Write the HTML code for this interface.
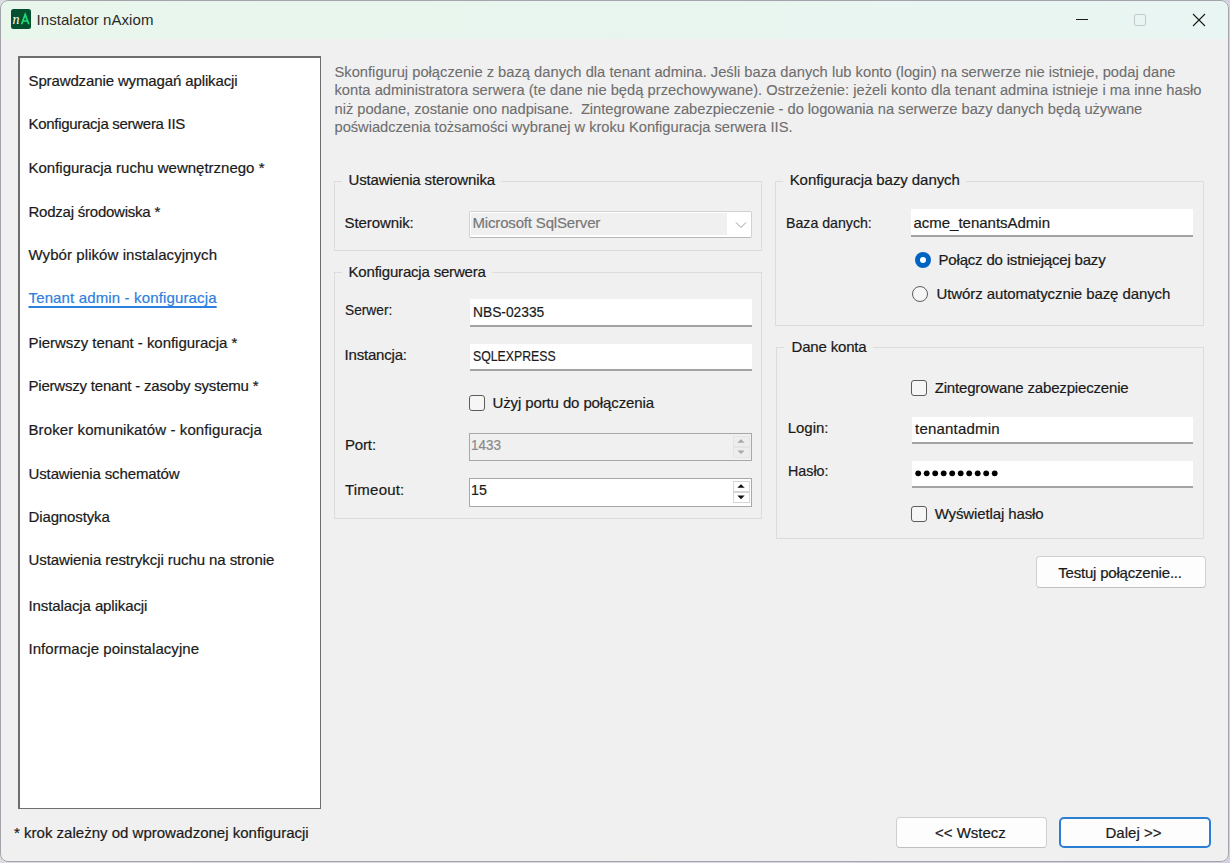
<!DOCTYPE html>
<html><head><meta charset="utf-8">
<style>
html,body{margin:0;padding:0;width:1230px;height:863px;overflow:hidden;background:linear-gradient(90deg,#dcdce2,#d4cfe8);}
body{position:relative;font-family:"Liberation Sans",sans-serif;font-size:14.6px;color:#1a1a1a;}
#win{position:absolute;left:0;top:0;width:1229px;height:862px;border-radius:8px;background:#f0f0f0;overflow:hidden;}
#wb{position:absolute;left:0;top:0;width:1229px;height:862px;box-sizing:border-box;border-radius:8px;border:1px solid #a4a4ac;pointer-events:none;}
#tb{position:absolute;left:0;top:0;width:1229px;height:39px;background:linear-gradient(90deg,#e8f6ec,#e9f5f2);}
.t{position:absolute;white-space:pre;line-height:17px;-webkit-text-stroke:0.2px currentColor;}
.box{position:absolute;box-sizing:border-box;}
.grp{position:absolute;box-sizing:border-box;border:1px solid #dcdcdc;}
.gap{position:absolute;height:3px;background:#f0f0f0;}
.tbx{position:absolute;box-sizing:border-box;background:#fff;border-bottom:2px solid #a3a3a3;}
.chk{position:absolute;box-sizing:border-box;width:16px;height:16px;border:1px solid #5c5c5c;border-radius:3px;background:#f6f6f6;}
.btn{position:absolute;box-sizing:border-box;background:#fdfdfd;border:1px solid #d0d0d0;border-bottom-color:#c0c0c0;border-radius:4px;}
</style></head><body>
<div id="win">
  <div id="tb"></div>
  <svg style="position:absolute;left:11px;top:9px" width="20" height="20" viewBox="0 0 20 20"><rect x="0" y="0" width="20" height="20" rx="2.5" fill="#03502f"/><text x="1.4" y="15.2" font-family="Liberation Serif" font-style="italic" font-size="14" fill="#fff">n</text><path d="M10.6 15.2L14.2 5.4L17.8 15.2M11.2 12H16.8" stroke="#1fe07a" stroke-width="1.6" fill="none"/></svg>
  <div class="box" style="left:1076px;top:19px;width:12px;height:1px;background:#1a1a1a;"></div>
  <div class="box" style="left:1134px;top:14px;width:12px;height:12px;border:1px solid #c4c8c8;border-radius:2px;"></div>
  <svg style="position:absolute;left:1192px;top:13px" width="14" height="14" viewBox="0 0 14 14"><path d="M1 1L13 13M13 1L1 13" stroke="#1a1a1a" stroke-width="1.1"/></svg>

  <div class="box" style="left:18px;top:56px;width:303px;height:753px;background:#fff;border:1px solid #6e6e6e;border-top-width:2px;border-left-width:2px;"></div>

  <div class="grp" style="left:334px;top:181px;width:428px;height:70px;"></div>
  <div class="gap" style="left:342px;top:180px;width:159px;"></div>
  <div class="box" style="left:469px;top:211px;width:283px;height:27px;background:#fff;border:1px solid #d2d2d2;border-bottom-color:#b8b8b8;border-radius:2px;"></div>
  <div class="box" style="left:471px;top:213px;width:256px;height:22px;background:#f0f0f0;"></div>
  <svg style="position:absolute;left:735px;top:221px" width="12" height="8" viewBox="0 0 12 8"><path d="M1 1.5L6 6.5L11 1.5" fill="none" stroke="#9a9a9a" stroke-width="1"/></svg>

  <div class="grp" style="left:334px;top:272px;width:428px;height:247px;"></div>
  <div class="gap" style="left:342px;top:271px;width:150px;"></div>
  <div class="tbx" style="left:470px;top:299px;width:282px;height:28px;"></div>
  <div class="tbx" style="left:470px;top:344px;width:282px;height:27px;"></div>
  <div class="chk" style="left:469px;top:395px;"></div>
  <div class="box" style="left:469px;top:433px;width:283px;height:28px;background:#f0f0f0;border:1px solid #a8a8a8;"></div>
  <div class="box" style="left:733px;top:436px;width:17px;height:11px;background:#ededed;border:1px solid #e4e4e4;"></div>
  <div class="box" style="left:733px;top:447px;width:17px;height:11px;background:#ededed;border:1px solid #e4e4e4;"></div>
  <svg style="position:absolute;left:736px;top:438px" width="10" height="18" viewBox="0 0 10 18"><path d="M1.3 4.8L5 1.2L8.7 4.8Z" fill="#a8a8a8"/><path d="M1.3 12.4L5 16L8.7 12.4Z" fill="#a8a8a8"/></svg>
  <div class="box" style="left:469px;top:478px;width:283px;height:29px;background:#fff;border:1px solid #a8a8a8;"></div>
  <div class="box" style="left:733px;top:481px;width:17px;height:11px;background:#fff;border:1px solid #d6d6d6;"></div>
  <div class="box" style="left:733px;top:492px;width:17px;height:11px;background:#fff;border:1px solid #d6d6d6;"></div>
  <svg style="position:absolute;left:736px;top:483px" width="10" height="18" viewBox="0 0 10 18"><path d="M1.3 4.8L5 1.2L8.7 4.8Z" fill="#111"/><path d="M1.3 12.6L5 16.2L8.7 12.6Z" fill="#111"/></svg>

  <div class="grp" style="left:775px;top:181px;width:429px;height:145px;"></div>
  <div class="gap" style="left:783px;top:180px;width:183px;"></div>
  <div class="tbx" style="left:911px;top:209px;width:282px;height:28px;"></div>
  <div class="box" style="left:915px;top:252px;width:16px;height:16px;border-radius:50%;background:#0063c4;"></div>
  <div class="box" style="left:920px;top:257px;width:6px;height:6px;border-radius:50%;background:#fff;"></div>
  <div class="box" style="left:912px;top:286px;width:16px;height:16px;border-radius:50%;border:1px solid #5c5c5c;background:#f6f6f6;"></div>

  <div class="grp" style="left:776px;top:347px;width:428px;height:192px;"></div>
  <div class="gap" style="left:784px;top:346px;width:89px;"></div>
  <div class="chk" style="left:911px;top:380px;"></div>
  <div class="tbx" style="left:912px;top:417px;width:281px;height:27px;"></div>
  <div class="tbx" style="left:912px;top:461px;width:281px;height:27px;"></div>
  <svg style="position:absolute;left:915px;top:470px" width="90" height="7" viewBox="0 0 90 7">
    <g fill="#000"><circle cx="3.2" cy="3.3" r="2.9"/><circle cx="11.7" cy="3.3" r="2.9"/><circle cx="20.2" cy="3.3" r="2.9"/><circle cx="28.7" cy="3.3" r="2.9"/><circle cx="37.2" cy="3.3" r="2.9"/><circle cx="45.7" cy="3.3" r="2.9"/><circle cx="54.2" cy="3.3" r="2.9"/><circle cx="62.7" cy="3.3" r="2.9"/><circle cx="71.2" cy="3.3" r="2.9"/><circle cx="79.7" cy="3.3" r="2.9"/></g></svg>
  <div class="chk" style="left:911px;top:506px;"></div>

  <div class="btn" style="left:1036px;top:556px;width:170px;height:32px;"></div>
  <div class="btn" style="left:896px;top:817px;width:151px;height:31px;"></div>
  <div class="btn" style="left:1059px;top:817px;width:152px;height:31px;border:2px solid #2a7fd4;border-radius:5px;"></div>
<div class="t" style="left:36.5px;top:10.7px;font-size:15px;letter-spacing:0.065px;color:#2a2a2a;-webkit-text-stroke:0;">Instalator nAxiom</div>
<div class="t" style="left:28.5px;top:71.8px;font-size:15px;letter-spacing:-0.124px;">Sprawdzanie wymagań aplikacji</div>
<div class="t" style="left:28.5px;top:114.7px;font-size:15px;letter-spacing:-0.288px;">Konfiguracja serwera IIS</div>
<div class="t" style="left:28.5px;top:158.6px;font-size:15px;letter-spacing:0.000px;">Konfiguracja ruchu wewnętrznego *</div>
<div class="t" style="left:28.5px;top:202.6px;font-size:15px;letter-spacing:-0.232px;">Rodzaj środowiska *</div>
<div class="t" style="left:28.5px;top:246.0px;font-size:15px;letter-spacing:0.074px;">Wybór plików instalacyjnych</div>
<div class="t" style="left:28.5px;top:289.4px;font-size:15px;letter-spacing:0.145px;color:#2d80dd;text-decoration:underline;text-underline-offset:2.5px;text-decoration-thickness:1.5px;">Tenant admin - konfiguracja</div>
<div class="t" style="left:28.5px;top:333.8px;font-size:15px;letter-spacing:-0.044px;">Pierwszy tenant - konfiguracja *</div>
<div class="t" style="left:28.5px;top:377.1px;font-size:15px;letter-spacing:-0.205px;">Pierwszy tenant - zasoby systemu *</div>
<div class="t" style="left:28.5px;top:421.0px;font-size:15px;letter-spacing:0.100px;">Broker komunikatów - konfiguracja</div>
<div class="t" style="left:28.5px;top:464.7px;font-size:15px;letter-spacing:-0.120px;">Ustawienia schematów</div>
<div class="t" style="left:28.5px;top:508.0px;font-size:15px;letter-spacing:-0.122px;">Diagnostyka</div>
<div class="t" style="left:28.5px;top:551.4px;font-size:15px;letter-spacing:-0.072px;">Ustawienia restrykcji ruchu na stronie</div>
<div class="t" style="left:28.5px;top:596.6px;font-size:15px;letter-spacing:-0.105px;">Instalacja aplikacji</div>
<div class="t" style="left:28.5px;top:640.0px;font-size:15px;letter-spacing:0.053px;">Informacje poinstalacyjne</div>
<div class="t" style="left:14.0px;top:824.0px;font-size:15px;letter-spacing:0.009px;">* krok zależny od wprowadzonej konfiguracji</div>
<div class="t" style="left:334.5px;top:64.1px;font-size:14.7px;letter-spacing:0.013px;color:#6e6e6e;-webkit-text-stroke:0.1px #6e6e6e;">Skonfiguruj połączenie z bazą danych dla tenant admina. Jeśli baza danych lub konto (login) na serwerze nie istnieje, podaj dane</div>
<div class="t" style="left:334.5px;top:82.4px;font-size:14.7px;letter-spacing:0.025px;color:#6e6e6e;-webkit-text-stroke:0.1px #6e6e6e;">konta administratora serwera (te dane nie będą przechowywane). Ostrzeżenie: jeżeli konto dla tenant admina istnieje i ma inne hasło</div>
<div class="t" style="left:334.5px;top:100.7px;font-size:14.7px;letter-spacing:-0.027px;color:#6e6e6e;-webkit-text-stroke:0.1px #6e6e6e;">niż podane, zostanie ono nadpisane.  Zintegrowane zabezpieczenie - do logowania na serwerze bazy danych będą używane</div>
<div class="t" style="left:334.5px;top:119.3px;font-size:14.7px;letter-spacing:-0.024px;color:#6e6e6e;-webkit-text-stroke:0.1px #6e6e6e;">poświadczenia tożsamości wybranej w kroku Konfiguracja serwera IIS.</div>
<div class="t" style="left:348.5px;top:171.2px;font-size:15px;letter-spacing:-0.130px;">Ustawienia sterownika</div>
<div class="t" style="left:344.5px;top:213.7px;font-size:15px;letter-spacing:-0.083px;">Sterownik:</div>
<div class="t" style="left:472.5px;top:214.2px;font-size:15px;letter-spacing:-0.167px;color:#777;">Microsoft SqlServer</div>
<div class="t" style="left:348.5px;top:262.8px;font-size:15px;letter-spacing:-0.185px;">Konfiguracja serwera</div>
<div class="t" style="left:344.5px;top:301.3px;font-size:15px;transform:scaleX(0.9151);transform-origin:0 0;">Serwer:</div>
<div class="t" style="left:472.5px;top:302.7px;font-size:15px;transform:scaleX(0.9193);transform-origin:0 0;">NBS-02335</div>
<div class="t" style="left:344.5px;top:345.7px;font-size:15px;letter-spacing:-0.192px;">Instancja:</div>
<div class="t" style="left:472.5px;top:346.8px;font-size:15px;transform:scaleX(0.8187);transform-origin:0 0;">SQLEXPRESS</div>
<div class="t" style="left:492.5px;top:394.2px;font-size:15px;letter-spacing:-0.119px;">Użyj portu do połączenia</div>
<div class="t" style="left:345.0px;top:436.4px;font-size:15px;letter-spacing:-0.158px;">Port:</div>
<div class="t" style="left:471.1px;top:436.0px;font-size:15px;transform:scaleX(0.8989);transform-origin:0 0;color:#8a8a8a;">1433</div>
<div class="t" style="left:345.0px;top:481.0px;font-size:15px;letter-spacing:0.213px;">Timeout:</div>
<div class="t" style="left:471.1px;top:481.0px;font-size:15px;transform:scaleX(0.9468);transform-origin:0 0;">15</div>
<div class="t" style="left:789.7px;top:170.8px;font-size:15px;letter-spacing:-0.070px;">Konfiguracja bazy danych</div>
<div class="t" style="left:786.2px;top:213.5px;font-size:15px;transform:scaleX(0.9438);transform-origin:0 0;">Baza danych:</div>
<div class="t" style="left:913.5px;top:213.5px;font-size:15px;letter-spacing:-0.015px;">acme_tenantsAdmin</div>
<div class="t" style="left:938.5px;top:251.0px;font-size:15px;letter-spacing:-0.183px;">Połącz do istniejącej bazy</div>
<div class="t" style="left:936.5px;top:285.2px;font-size:15px;letter-spacing:-0.097px;">Utwórz automatycznie bazę danych</div>
<div class="t" style="left:791.5px;top:337.5px;font-size:15px;letter-spacing:-0.173px;">Dane konta</div>
<div class="t" style="left:934.7px;top:378.7px;font-size:15px;letter-spacing:-0.173px;">Zintegrowane zabezpieczenie</div>
<div class="t" style="left:787.8px;top:418.8px;font-size:15px;letter-spacing:-0.062px;">Login:</div>
<div class="t" style="left:915.0px;top:420.0px;font-size:15px;letter-spacing:0.212px;">tenantadmin</div>
<div class="t" style="left:787.8px;top:462.2px;font-size:15px;transform:scaleX(0.9522);transform-origin:0 0;">Hasło:</div>
<div class="t" style="left:934.7px;top:504.5px;font-size:15px;letter-spacing:-0.122px;">Wyświetlaj hasło</div>
<div class="t" style="left:1058.2px;top:563.5px;font-size:15px;letter-spacing:-0.199px;">Testuj połączenie...</div>
<div class="t" style="left:935.0px;top:823.9px;font-size:15px;letter-spacing:-0.018px;">&lt;&lt; Wstecz</div>
<div class="t" style="left:1105.5px;top:824.0px;font-size:15px;letter-spacing:0.016px;">Dalej &gt;&gt;</div>
</div>
<div id="wb"></div>
</body></html>
